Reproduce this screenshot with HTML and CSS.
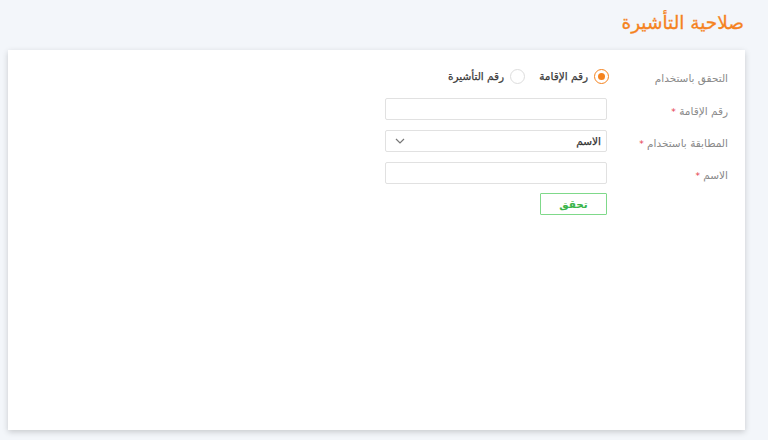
FILE: index.html
```html
<!DOCTYPE html>
<html lang="ar" dir="rtl">
<head>
<meta charset="utf-8">
<link rel="stylesheet" href="styles.css">
</head>
<body>
<header class="page-head">
  <h1 class="page-title">صلاحية التأشيرة</h1>
</header>
<main class="card">
  <form class="form">
    <div class="row row-radio">
      <label class="lbl">التحقق باستخدام</label>
      <div class="radios">
        <span class="radio checked"><span class="dot"></span></span>
        <span class="radio-text">رقم الإقامة</span>
        <span class="radio"></span>
        <span class="radio-text">رقم التأشيرة</span>
      </div>
    </div>
    <div class="row">
      <label class="lbl">رقم الإقامة <span class="req">*</span></label>
      <input class="field" type="text">
    </div>
    <div class="row">
      <label class="lbl">المطابقة باستخدام <span class="req">*</span></label>
      <div class="field select">
        <span class="select-val">الاسم</span>
        <svg class="chev" width="10" height="6" viewBox="0 0 10 6"><path d="M1 1l4 4 4-4" fill="none" stroke="#777" stroke-width="1.2"/></svg>
      </div>
    </div>
    <div class="row">
      <label class="lbl">الاسم <span class="req">*</span></label>
      <input class="field" type="text">
    </div>
    <div class="row row-btn">
      <span class="lbl"></span>
      <button class="btn" type="button">تحقق</button>
    </div>
  </form>
</main>
</body>
</html>
```
FILE: styles.css
```css
* { box-sizing: border-box; }
html, body { margin: 0; padding: 0; }
body {
  background: #f3f6fa;
  font-family: "DejaVu Sans", sans-serif;
  width: 768px;
  height: 440px;
  overflow: hidden;
}
.page-head {
  height: 50px;
  padding: 10px 24px 0 0;
}
.page-title {
  margin: 0;
  color: #f5831f;
  font-size: 18.5px;
  font-weight: normal;
  line-height: 26px;
  -webkit-text-stroke: 0.3px #f5831f;
}
.card {
  margin: 0 23px 0 8px;
  height: 380px;
  background: #fff;
  box-shadow: 0 2px 6px rgba(0,0,0,0.18);
  padding: 15px 17px 0 0;
}
.form {
  display: flex;
  flex-direction: column;
  gap: 10px;
}
.row {
  display: flex;
  align-items: center;
  height: 22px;
}
.row-radio { height: 22px; margin-bottom: 1px; }
.lbl {
  width: 121px;
  font-size: 10.5px;
  color: #8a8a8a;
  padding-top: 3px;
}
.req { color: #e5394a; font-size: 9px; }
.radios {
  display: flex;
  align-items: center;
  margin-right: -2px;
}
.radio {
  width: 15px;
  height: 15px;
  border-radius: 50%;
  border: 1.5px solid #ddd;
  display: flex;
  align-items: center;
  justify-content: center;
}
.radio.checked { border-color: #f5831f; }
.dot { width: 7px; height: 7px; border-radius: 50%; background: #f5831f; }
.radio-text {
  font-size: 10.5px;
  color: #3a3a3a;
  -webkit-text-stroke: 0.25px #3a3a3a;
  margin: 0 6px 0 14px;
}
.field {
  width: 222px;
  height: 22px;
  border: 1px solid #e1e1e1;
  border-radius: 2px;
  background: #fff;
  margin: 0;
  padding: 0 5px 0 8px;
  outline: none;
}
.select {
  display: flex;
  align-items: center;
  justify-content: space-between;
}
.select-val { font-size: 10.5px; color: #333; -webkit-text-stroke: 0.25px #333; }
.chev { margin-left: 1px; }
.row-btn { margin-top: -1px; }
.btn {
  width: 67px;
  height: 22px;
  border: 1.5px solid #7fd98a;
  background: #fff;
  color: #3ab54a;
  font-family: "DejaVu Sans", sans-serif;
  font-size: 10.5px;
  font-weight: bold;
  border-radius: 1px;
  padding: 0;
}
```
